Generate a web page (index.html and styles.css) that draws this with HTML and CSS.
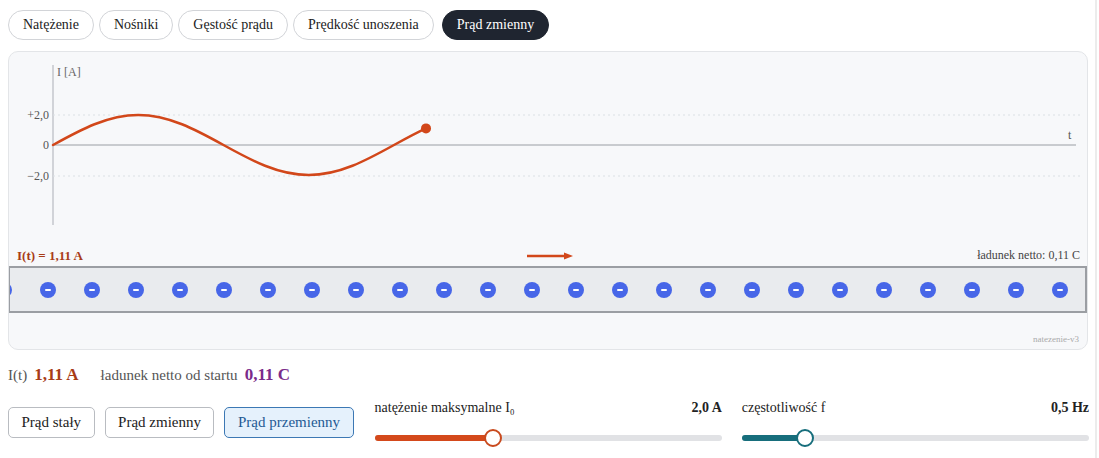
FILE: index.html
```html
<!DOCTYPE html>
<html lang="pl">
<head>
<meta charset="utf-8">
<title>Natężenie prądu</title>
<link rel="stylesheet" href="styles.css">
</head>
<body>
<div class="page">
  <nav class="tabs">
    <span class="tab">Natężenie</span>
    <span class="tab">Nośniki</span>
    <span class="tab">Gęstość prądu</span>
    <span class="tab">Prędkość unoszenia</span>
    <span class="tab active">Prąd zmienny</span>
  </nav>

  <section class="card">
    <svg class="chart" width="1078" height="194" viewBox="0 0 1078 194">
      <line x1="44" y1="13" x2="44" y2="173" stroke="#c4c7cc" stroke-width="1.5"/>
      <text x="48" y="24" class="axlab">I [A]</text>
      <line x1="44" y1="63" x2="1071" y2="63" stroke="#dcdfe3" stroke-width="1.2" stroke-dasharray="2 3"/>
      <line x1="44" y1="124" x2="1071" y2="124" stroke="#dcdfe3" stroke-width="1.2" stroke-dasharray="2 3"/>
      <line x1="44" y1="93" x2="1067" y2="93" stroke="#9a9ea4" stroke-width="1"/>
      <text x="40" y="67" class="tick" text-anchor="end">+2,0</text>
      <text x="40" y="97" class="tick" text-anchor="end">0</text>
      <text x="40" y="128" class="tick" text-anchor="end">−2,0</text>
      <text x="1059" y="87" class="tick">t</text>
      <path d="M44,93 C71.8,77.63 98.54,63 129.25,63 C159.96,63 186.7,77.63 214.5,93 C242.3,108.37 269.04,123 299.75,123 C330.46,123 357.2,108.37 385,93 C395.65,87.12 406.3,81.24 416.94,76.35" fill="none" stroke="#d2471a" stroke-width="2.5" stroke-linecap="round"/>
      <circle cx="417" cy="76.4" r="5" fill="#d2471a"/>
    </svg>

    <div class="wire-head">
      <span class="it">I(t) = 1,11 A</span>
      <svg class="arrow" width="48" height="8" viewBox="0 0 48 8">
        <line x1="1" y1="4" x2="40" y2="4" stroke="#d2471a" stroke-width="2.5"/>
        <path d="M38,0.5 L47,4 L38,7.5 Z" fill="#d2471a"/>
      </svg>
      <span class="net">ładunek netto: 0,11 C</span>
    </div>

    <div class="wire">
      <span class="e"></span><span class="e"></span><span class="e"></span><span class="e"></span><span class="e"></span>
      <span class="e"></span><span class="e"></span><span class="e"></span><span class="e"></span><span class="e"></span>
      <span class="e"></span><span class="e"></span><span class="e"></span><span class="e"></span><span class="e"></span>
      <span class="e"></span><span class="e"></span><span class="e"></span><span class="e"></span><span class="e"></span>
      <span class="e"></span><span class="e"></span><span class="e"></span><span class="e"></span><span class="e"></span>
    </div>

    <div class="card-foot">natezenie-v3</div>
  </section>

  <div class="stats">
    <span class="muted">I(t)</span>
    <b class="cur">1,11 A</b>
    <span class="muted sp">ładunek netto od startu</span>
    <b class="chg">0,11 C</b>
  </div>

  <div class="controls">
    <div class="modes">
      <button class="mode">Prąd stały</button>
      <button class="mode">Prąd zmienny</button>
      <button class="mode on">Prąd przemienny</button>
    </div>
    <div class="slider">
      <div class="slabel"><span>natężenie maksymalne I₀</span><b>2,0 A</b></div>
      <div class="track"><div class="fill orange" style="width:34.2%"><span class="thumb orange-t"></span></div></div>
    </div>
    <div class="slider">
      <div class="slabel"><span>częstotliwość f</span><b>0,5 Hz</b></div>
      <div class="track"><div class="fill teal" style="width:18.2%"><span class="thumb teal-t"></span></div></div>
    </div>
  </div>
</div>
</body>
</html>
```

FILE: styles.css
```css
html { background: #fff; }
body {
  margin: 0;
  font-family: "Liberation Serif", "Times New Roman", serif;
  color: #222;
}
.page {
  box-sizing: border-box;
  width: 1097px;
  min-height: 458px;
  padding: 10px 0 0 8px;
  border-right: 2px solid #ececec;
}
.tabs {
  display: flex;
  gap: 5px;
}
.tab {
  box-sizing: border-box;
  height: 30px;
  line-height: 28px;
  padding: 0 14px;
  border: 1px solid #d2d4d8;
  border-radius: 15px;
  font-size: 14px;
  color: #222;
  background: #fff;
}
.tab.active {
  background: #1f2530;
  border-color: #1f2530;
  color: #fff;
  margin-left: 3px;
}
.card {
  box-sizing: border-box;
  width: 1080px;
  height: 299px;
  margin-top: 11px;
  border: 1px solid #e3e5e8;
  border-radius: 10px;
  background: #f7f8fa;
  overflow: hidden;
}
.chart { display: block; }
.axlab { font-family: "Liberation Serif", serif; font-size: 12px; fill: #666; }
.tick { font-family: "Liberation Serif", serif; font-size: 12px; fill: #555; }
.wire-head {
  display: grid;
  grid-template-columns: 1fr auto 1fr;
  align-items: center;
  height: 19px;
  padding: 0 7px 0 8px;
}
.it { font-size: 13px; font-weight: bold; color: #a83c17; }
.arrow { display: block; margin-left: 2px; }
.net { justify-self: end; font-size: 12px; color: #444; }
.wire {
  display: flex;
  align-items: center;
  gap: 28px;
  height: 47px;
  box-sizing: border-box;
  border: 2px solid #9b9ea3;
  border-left-width: 1px;
  background: #e9ebee;
  overflow: hidden;
  margin-top: 1px;
}
.e {
  flex: 0 0 16px;
  height: 16px;
  border-radius: 50%;
  background: #4766e8;
  position: relative;
}
.e:first-child { margin-left: -14px; }
.e::after {
  content: "";
  position: absolute;
  left: 5px;
  top: 7px;
  width: 6px;
  height: 2px;
  border-radius: 1px;
  background: #fff;
}
.card-foot {
  text-align: right;
  font-size: 9px;
  color: #aaa;
  padding: 21px 8px 0 0;
}
.stats {
  display: flex;
  align-items: baseline;
  margin-top: 15px;
  font-size: 15px;
}
.muted { color: #555; }
.cur { font-size: 17px; color: #a83c17; margin-left: 7px; }
.sp { margin-left: 22px; }
.chg { font-size: 17px; color: #7a2a8a; margin-left: 7px; }
.controls {
  display: flex;
  gap: 20px;
  margin-top: 15px;
  width: 1081px;
}
.modes {
  display: flex;
  gap: 10px;
  padding-top: 7px;
  margin-right: 1px;
}
.mode {
  box-sizing: border-box;
  height: 31px;
  padding: 0 12.5px;
  border: 1px solid #b9bcc1;
  border-radius: 5px;
  background: #fff;
  font-family: "Liberation Serif", serif;
  font-size: 15px;
  color: #222;
}
.mode.on {
  background: #e5f1fc;
  border-color: #3c78b4;
  color: #1f5a94;
}
.slider { flex: 1; }
.slabel {
  display: flex;
  justify-content: space-between;
  font-size: 14px;
  line-height: 16px;
}
.slabel b { font-size: 14px; }
.track {
  margin-top: 19px;
  height: 6px;
  border-radius: 3px;
  background: #e1e2e5;
}
.fill {
  position: relative;
  height: 6px;
  border-radius: 3px;
}
.orange { background: #d4491b; }
.teal { background: #176e7c; }
.thumb {
  position: absolute;
  right: -9px;
  top: -6px;
  box-sizing: border-box;
  width: 18px;
  height: 18px;
  border-radius: 50%;
  background: #fff;
  border: 2px solid;
}
.orange-t { border-color: #c94a1e; }
.teal-t { border-color: #176e7c; }
```
